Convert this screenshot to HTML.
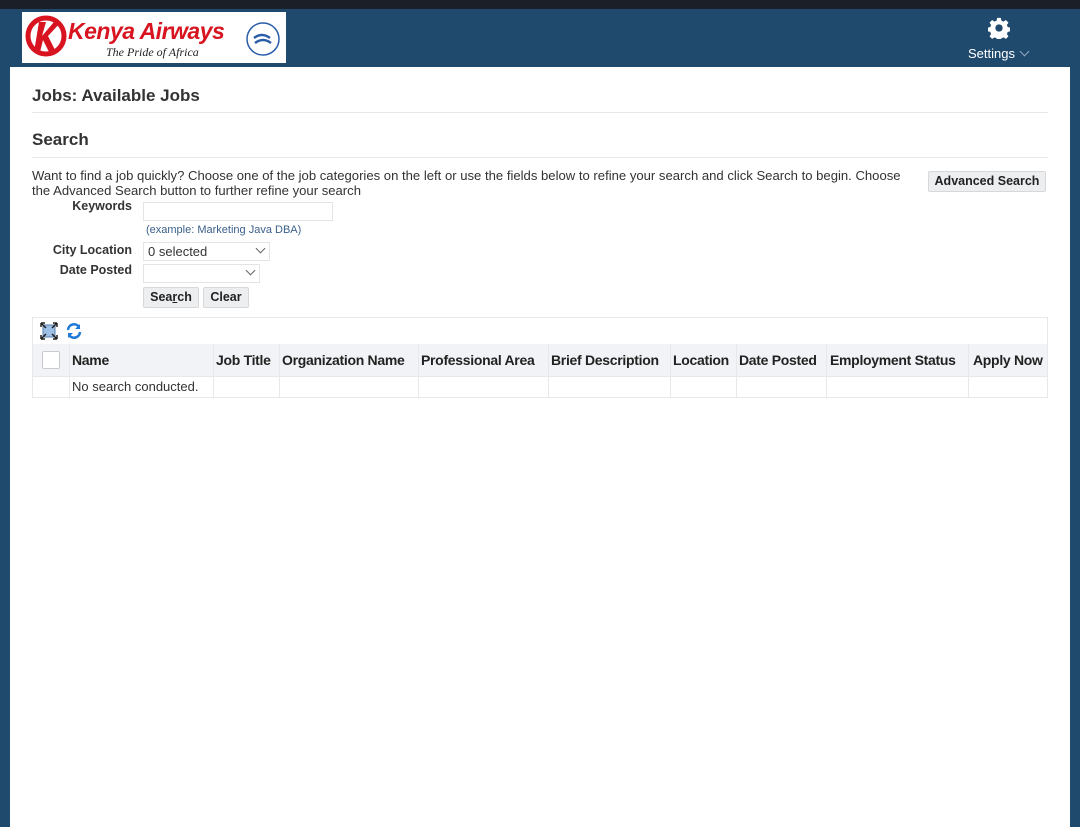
<!DOCTYPE html>
<html><head><meta charset="utf-8"><style>
*{margin:0;padding:0;box-sizing:border-box}
body{width:1080px;height:820px;overflow:hidden;background:#1f4a6e;font-family:"Liberation Sans",sans-serif;color:#222;position:relative}
.a{position:absolute}
.top{left:0;top:0;width:1080px;height:9px;background:#1b2028}
.panel{left:10px;top:67px;width:1060px;height:760px;background:#fff}
.hr{height:1px;background:#e6e8ea}
.lbl{font-size:12.5px;font-weight:bold;color:#333;text-align:right;width:100px}
.inp{border:1px solid #e2e4e6;background:#fff;height:19px}
.btn{background:#eceef0;border:1px solid #d6d8da;border-radius:2px;font-size:12.5px;font-weight:bold;color:#222;text-align:center;line-height:19px;height:21px}
.th{font-size:14px;font-weight:bold;color:#222;top:352px;letter-spacing:-0.3px;white-space:nowrap}
.vl{width:1px;background:#e6e8ea}
.chev{width:7px;height:7px;border-right:1px solid #666;border-bottom:1px solid #666;transform:rotate(45deg)}
</style></head><body>
<div class="a top"></div>
<div class="a" style="left:22px;top:12px;width:264px;height:51px;background:#fff">
 <svg class="a" style="left:2px;top:2px" width="44" height="44" viewBox="0 0 44 44"><circle cx="22" cy="22" r="18" fill="none" stroke="#d7141f" stroke-width="5"/><path d="M15 8 L22 8 L18 22 L30 8 L37 8 L24 22 L32 38 L25 38 L19 26 L16 38 L10 38Z" fill="#d7141f"/></svg>
 <div class="a" style="left:46px;top:6px;font-size:23px;font-weight:bold;font-style:italic;color:#d7141f;letter-spacing:-0.5px">Kenya Airways</div>
 <div class="a" style="left:84px;top:33px;font-size:12px;font-style:italic;font-family:'Liberation Serif',serif;color:#222">The Pride of Africa</div>
 <svg class="a" style="left:222px;top:6px" width="38" height="40" viewBox="0 0 38 40"><circle cx="19" cy="21" r="16" fill="none" stroke="#2a5da8" stroke-width="1.5"/><path d="M10 20 q8-6 16 0 M11 25 q8-6 16 0" stroke="#2a5da8" stroke-width="2.5" fill="none"/></svg>
</div>
<svg class="a" style="left:988px;top:17px" width="22" height="22" viewBox="0 0 24 24"><path fill="#fff" d="M10 1h4l.6 3 2.3 1 2.6-1.7 2.8 2.8-1.7 2.6 1 2.3 3 .6v4l-3 .6-1 2.3 1.7 2.6-2.8 2.8-2.6-1.7-2.3 1-.6 3h-4l-.6-3-2.3-1-2.6 1.7-2.8-2.8 1.7-2.6-1-2.3-3-.6v-4l3-.6 1-2.3-1.7-2.6 2.8-2.8 2.6 1.7 2.3-1z"/><circle cx="12" cy="12" r="4" fill="#1f4a6e"/></svg>
<div class="a" style="left:968px;top:46px;font-size:13px;color:#fff">Settings</div>
<div class="a chev" style="left:1021px;top:48px;border-color:#8fa8c0"></div>
<div class="a panel"></div>
<div class="a" style="left:32px;top:86px;font-size:17px;font-weight:bold;color:#333">Jobs: Available Jobs</div>
<div class="a hr" style="left:32px;top:112px;width:1016px"></div>
<div class="a" style="left:32px;top:130px;font-size:17px;font-weight:bold;color:#333">Search</div>
<div class="a hr" style="left:32px;top:157px;width:1016px"></div>
<div class="a" style="left:32px;top:169px;width:885px;font-size:13.1px;line-height:14.5px;color:#333">Want to find a job quickly? Choose one of the job categories on the left or use the fields below to refine your search and click Search to begin. Choose the Advanced Search button to further refine your search</div>
<div class="a btn" style="left:928px;top:171px;width:118px">Advanced Search</div>
<div class="a lbl" style="left:32px;top:199px">Keywords</div>
<div class="a inp" style="left:143px;top:202px;width:190px"></div>
<div class="a" style="left:146px;top:224px;font-size:11px;color:#3a5f8a">(example: Marketing Java DBA)</div>
<div class="a lbl" style="left:32px;top:243px">City Location</div>
<div class="a inp" style="left:143px;top:242px;width:127px;font-size:13px;line-height:17px;padding-left:4px;color:#333">0 selected</div>
<div class="a chev" style="left:257px;top:245px"></div>
<div class="a lbl" style="left:32px;top:263px">Date Posted</div>
<div class="a inp" style="left:143px;top:264px;width:117px"></div>
<div class="a chev" style="left:247px;top:267px"></div>
<div class="a btn" style="left:143px;top:287px;width:56px">Sea<u>r</u>ch</div>
<div class="a btn" style="left:203px;top:287px;width:46px">Clear</div>
<div class="a" style="left:32px;top:317px;width:1016px;height:81px;border:1px solid #e6e8ea"></div>
<svg class="a" style="left:40px;top:322px" width="18" height="18" viewBox="0 0 18 18"><rect x="3" y="3" width="12" height="12" fill="#9cc0e6" stroke="#5a7fa8"/><path d="M1 1l5 5M17 1l-5 5M1 17l5-5M17 17l-5-5M1 1h4M1 1v4M17 1h-4M17 1v4M1 17h4M1 17v-4M17 17h-4M17 17v-4" stroke="#222" stroke-width="1.5"/></svg>
<svg class="a" style="left:66px;top:323px" width="16" height="16" viewBox="0 0 16 16"><path d="M2 7a6 6 0 0 1 11-3M14 9a6 6 0 0 1-11 3" stroke="#1e7ad6" stroke-width="2.5" fill="none"/><path d="M14 1v5h-5zM2 15v-5h5z" fill="#1e7ad6"/></svg>
<div class="a" style="left:33px;top:344px;width:1014px;height:32px;background:#f2f3f6"></div>
<div class="a hr" style="left:33px;top:376px;width:1014px"></div>
<div class="a" style="left:42px;top:351px;width:18px;height:18px;border:1px solid #c8cacc;border-radius:2px;background:#fff"></div>
<div class="a vl" style="left:69px;top:344px;height:53px"></div>
<div class="a vl" style="left:213px;top:344px;height:53px"></div>
<div class="a vl" style="left:279px;top:344px;height:53px"></div>
<div class="a vl" style="left:418px;top:344px;height:53px"></div>
<div class="a vl" style="left:548px;top:344px;height:53px"></div>
<div class="a vl" style="left:670px;top:344px;height:53px"></div>
<div class="a vl" style="left:736px;top:344px;height:53px"></div>
<div class="a vl" style="left:826px;top:344px;height:53px"></div>
<div class="a vl" style="left:968px;top:344px;height:53px"></div>
<div class="a th" style="left:72px">Name</div>
<div class="a th" style="left:216px">Job Title</div>
<div class="a th" style="left:282px">Organization Name</div>
<div class="a th" style="left:421px">Professional Area</div>
<div class="a th" style="left:551px">Brief Description</div>
<div class="a th" style="left:673px">Location</div>
<div class="a th" style="left:739px">Date Posted</div>
<div class="a th" style="left:830px">Employment Status</div>
<div class="a th" style="left:973px">Apply Now</div>
<div class="a" style="left:72px;top:379px;font-size:13px;color:#333">No search conducted.</div>
</body></html>
